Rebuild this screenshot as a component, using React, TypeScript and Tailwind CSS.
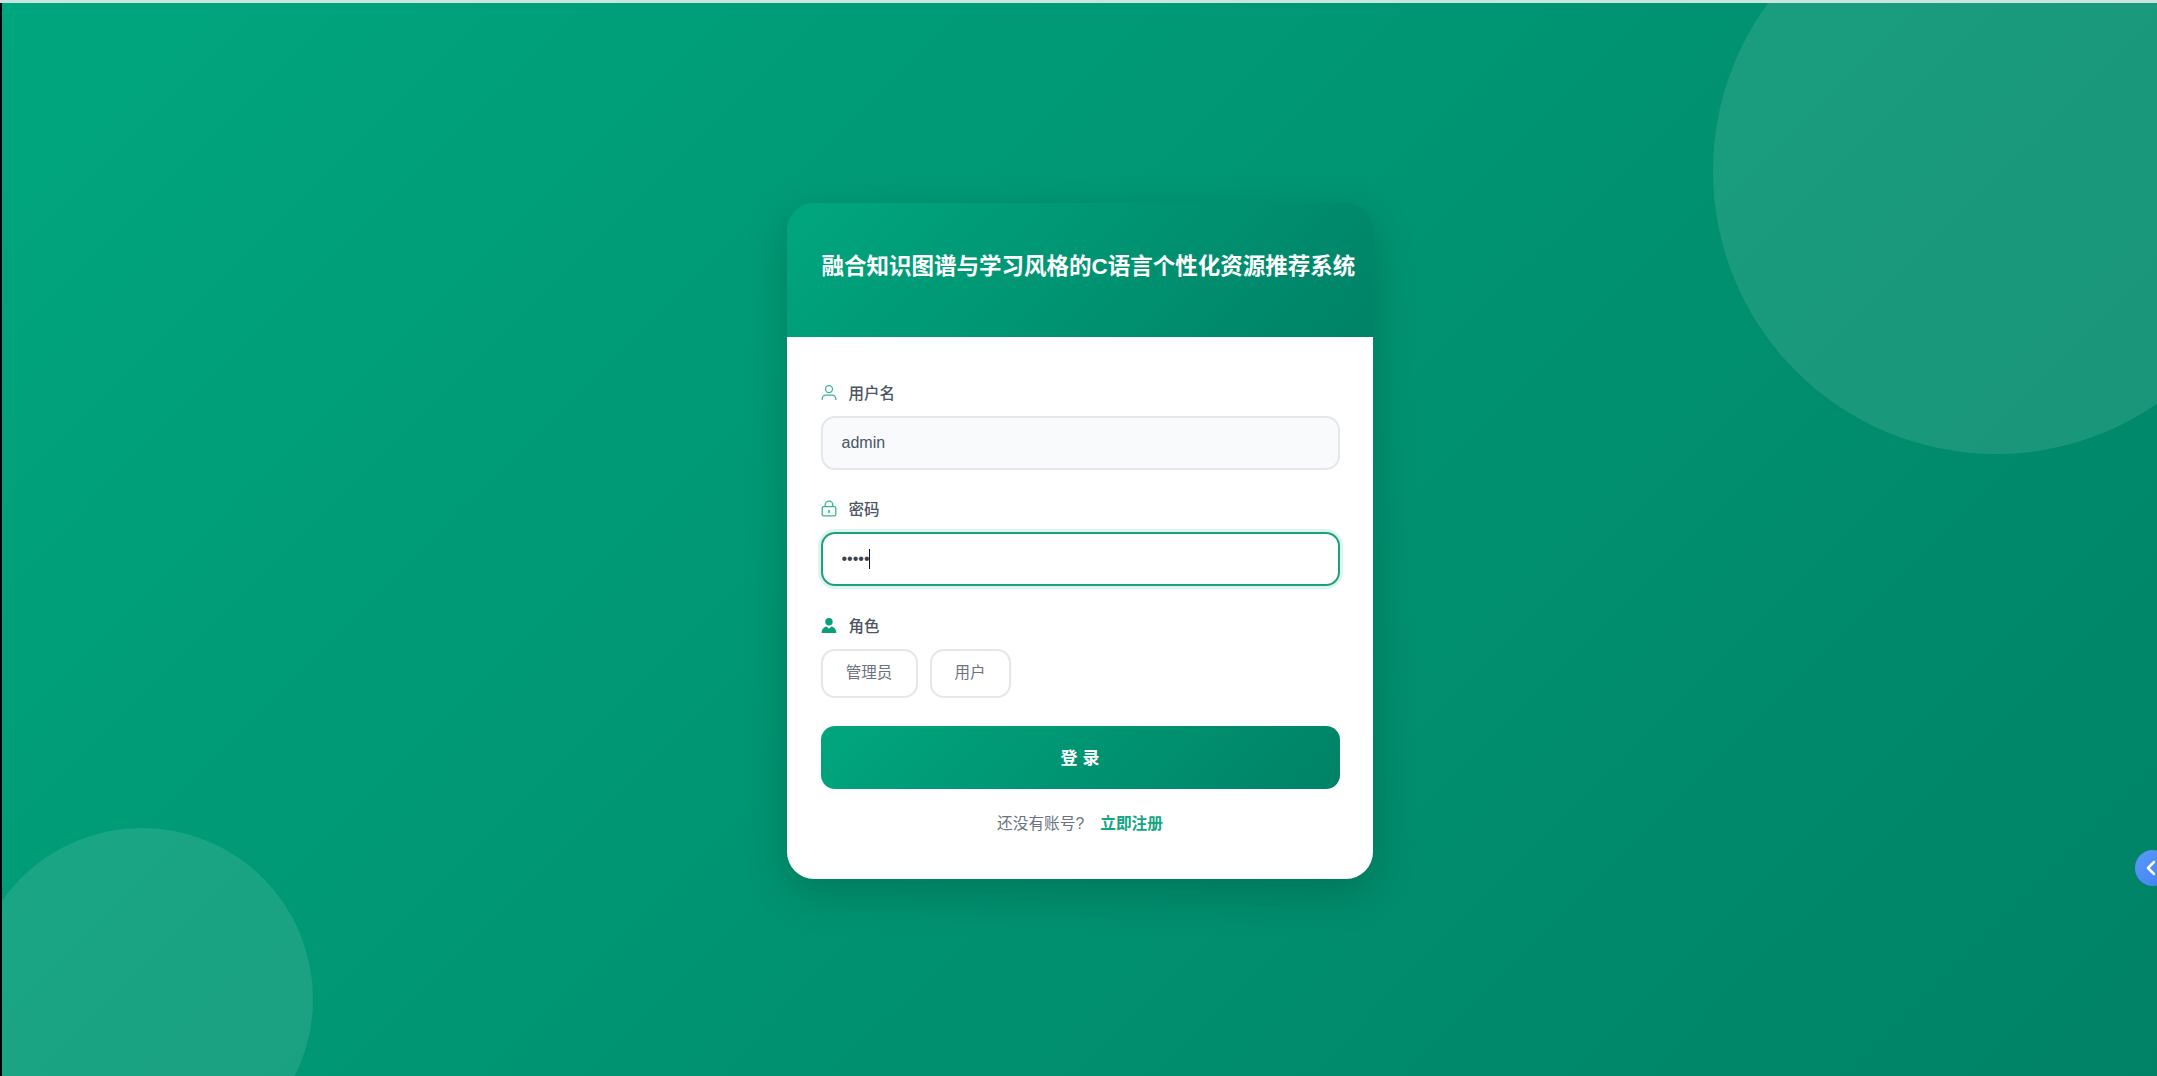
import React from 'react';
import { ChevronLeft } from 'lucide-react';

const FONT = "font-['Liberation_Sans','Noto_Sans_CJK_SC',sans-serif]";

const UserIcon = () => (
  <svg viewBox="0 0 16 16" className="w-[17px] h-[17px] -mt-0.5" fill="none" stroke="#3bb497" strokeWidth="1.3" strokeLinecap="round">
    <circle cx="8" cy="4.6" r="3.5" />
    <path d="M1.2 15v-.8a3.6 3.6 0 0 1 3.6-3.6h6.4a3.6 3.6 0 0 1 3.6 3.6v.8" />
  </svg>
);

const LockIcon = () => (
  <svg viewBox="0 0 16 16" className="w-[17px] h-[17px] -mt-0.5" fill="none" stroke="#3bb497" strokeWidth="1.3">
    <rect x="1.2" y="6.2" width="13.6" height="9.2" rx="1.4" />
    <path d="M4.2 6.2V4.4a3.8 3.8 0 0 1 7.6 0v1.8" />
    <path d="M8 10v2" strokeWidth="1.6" strokeLinecap="round" />
  </svg>
);

const RoleIcon = () => (
  <svg viewBox="0 0 16 16" className="w-[17px] h-[17px] -mt-0.5" fill="#0a9f7c">
    <circle cx="8" cy="4.2" r="3.7" />
    <path d="M.6 15.6c0-3.8 2.4-6.2 5-6.7L8 11.2l2.4-2.3c2.6.5 5 2.9 5 6.7z" />
  </svg>
);

const FieldLabel: React.FC<{ icon: React.ReactNode; text: string }> = ({ icon, text }) => (
  <div className="flex items-center h-6 mb-2.5 text-[15.5px] font-medium text-[#4b5563]">
    <span className="w-4 flex justify-center mr-3">{icon}</span>
    {text}
  </div>
);

export default function App() {
  return (
    <div className={`${FONT} h-[1076px] flex flex-col overflow-hidden bg-white`}>
      <div className="h-[3px] shrink-0 bg-[#c8e6de]" />
      <div className="flex-1 flex min-h-0">
        <div className="w-0.5 shrink-0 bg-black" />
        <main className="relative flex-1 flex items-center justify-center pt-0.5 overflow-hidden bg-[linear-gradient(135deg,#00a67e_0%,#008266_100%)]">
          <div className="absolute left-[-31px] top-[825px] w-[342px] h-[342px] rounded-full bg-white/10" />
          <div className="absolute left-[1711px] top-[-115px] w-[566px] h-[566px] rounded-full bg-white/10" />

          <div className="relative flex flex-col w-[586px] h-[676px] rounded-[27px] overflow-hidden shadow-[0_14px_44px_rgba(0,0,0,0.18)]">
            <div className="h-[134px] pl-[35px] pt-[48px] bg-[linear-gradient(135deg,#00a67e_0%,#008266_100%)]">
              <h1 className="text-[22.5px] leading-8 font-bold text-white whitespace-nowrap">
                融合知识图谱与学习风格的C语言个性化资源推荐系统
              </h1>
            </div>

            <form className="flex-1 bg-white pl-[34px] pr-[33px] pt-[45px] pb-[43px]">
              <FieldLabel icon={<UserIcon />} text="用户名" />
              <input
                defaultValue="admin"
                className="block w-full h-[54px] px-[19px] rounded-[14px] border-2 border-[#e5e7eb] bg-[#f8fafc] text-base text-[#4b5563] outline-none"
              />

              <div className="mt-7">
                <FieldLabel icon={<LockIcon />} text="密码" />
                <div className="relative">
                  <input
                    type="password"
                    defaultValue="admin"
                    className="block w-full h-[54px] px-[19px] rounded-[14px] border-2 border-[#1f9f82] bg-white text-base text-[#374151] caret-transparent outline-none shadow-[0_0_0_3px_rgba(16,185,129,0.14)]"
                  />
                  <span className="absolute left-[48px] top-[17px] w-px h-5 bg-[#111827]" />
                </div>
              </div>

              <div className="mt-[29px]">
                <FieldLabel icon={<RoleIcon />} text="角色" />
                <div className="flex gap-3">
                  <button type="button" className="w-[97px] h-[49px] rounded-[14px] border-2 border-[#e5e7eb] bg-white text-[15.5px] text-[#6b7280]">
                    管理员
                  </button>
                  <button type="button" className="w-[81px] h-[49px] rounded-[14px] border-2 border-[#e5e7eb] bg-white text-[15.5px] text-[#6b7280]">
                    用户
                  </button>
                </div>
              </div>

              <button
                type="button"
                className="block w-full h-[63px] mt-7 pl-[5px] pt-[3px] rounded-[14px] bg-[linear-gradient(135deg,#00a67e_0%,#008266_100%)] text-[17px] font-bold tracking-[5px] text-white"
              >
                登录
              </button>

              <div className="flex items-center justify-center h-6 mt-[23px] text-[15.7px] text-[#6b7280]">
                还没有账号?
                <a href="#" className="ml-4 font-semibold text-[#14a583]">立即注册</a>
              </div>
            </form>
          </div>

          <div className="absolute left-[2133px] top-[847px] w-9 h-9 rounded-full bg-[linear-gradient(135deg,#5b9bfa,#3f7ff0)] flex items-center pl-1">
            <ChevronLeft className="w-6 h-6 text-white" strokeWidth={2.5} />
          </div>
        </main>
      </div>
    </div>
  );
}
